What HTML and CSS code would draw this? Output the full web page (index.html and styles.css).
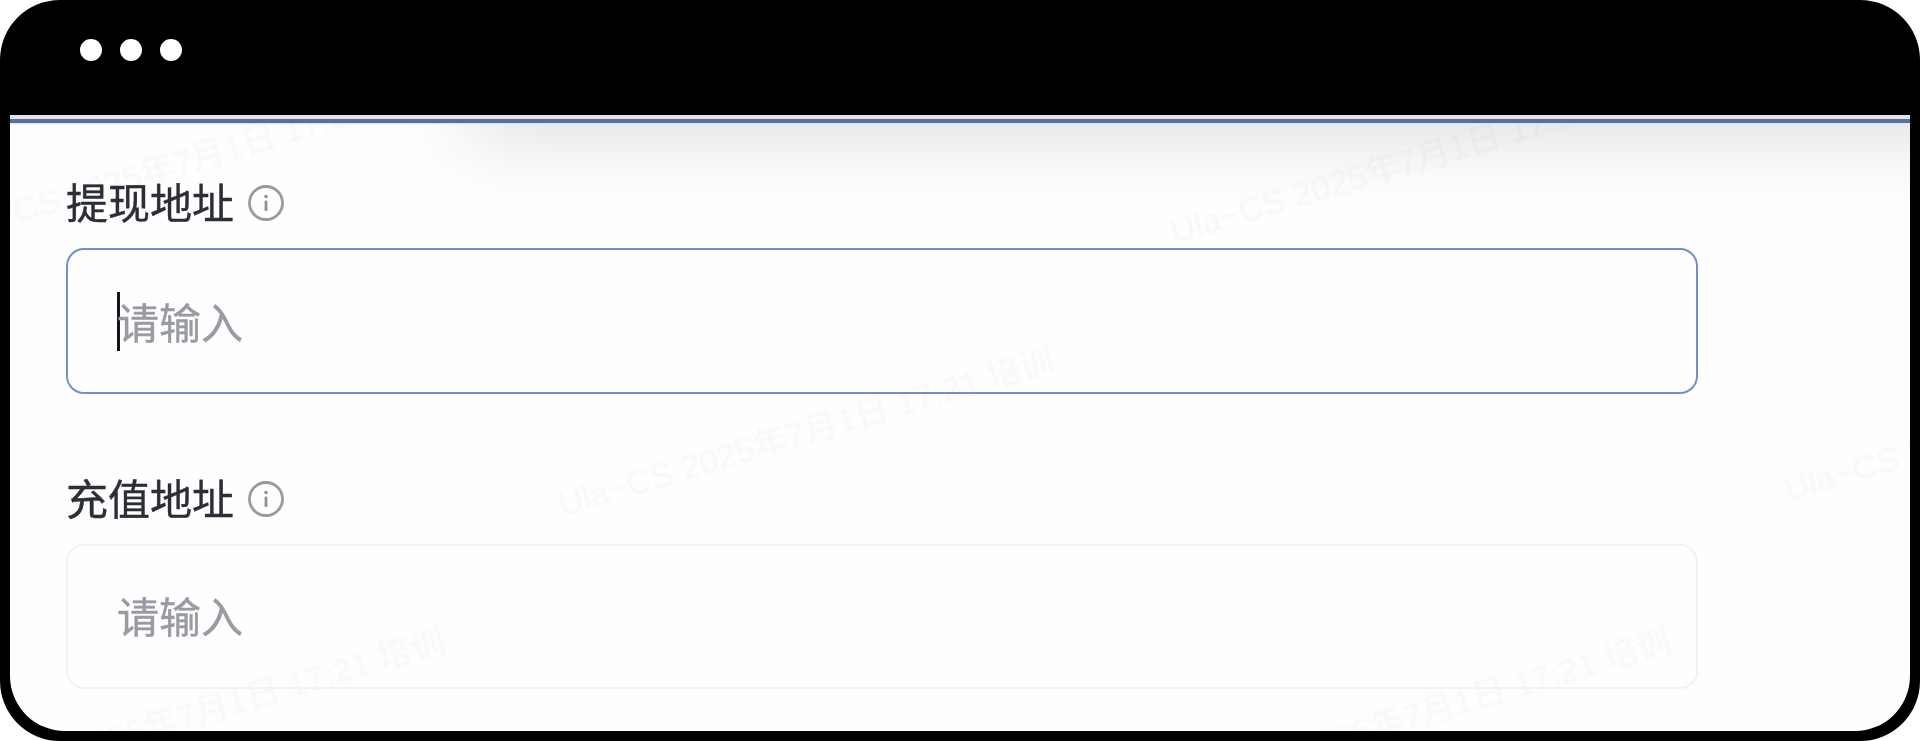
FILE: index.html
```html
<!DOCTYPE html>
<html lang="zh-CN">
<head>
  <meta charset="UTF-8">
  <meta name="viewport" content="width=device-width, initial-scale=1.0">
  <title>地址设置</title>
  <link rel="stylesheet" href="styles.css">
</head>
<body>
  <div class="frame">
    <div class="titlebar">
      <span class="dot"></span>
      <span class="dot"></span>
      <span class="dot"></span>
    </div>
    <div class="content">
      <!-- watermark layer -->
      <div class="watermarks">
        <span class="wm wm-a">Ula~CS 2025年7月1日 17:21 培训</span>
        <span class="wm wm-b">Ula~CS 2025年7月1日 17:21 培训</span>
        <span class="wm wm-c">Ula~CS 2025年7月1日 17:21 培训</span>
        <span class="wm wm-d">Ula~CS 2025年7月1日 17:21 培训</span>
        <span class="wm wm-e">Ula~CS 2025年7月1日 17:21 培训</span>
        <span class="wm wm-f">Ula~CS 2025年7月1日 17:21 培训</span>
      </div>

      <div class="top-line"></div>

      <form class="form">
        <div class="form-item">
          <div class="label">
            <span>提现地址</span>
            <svg class="info" viewBox="0 0 36 36" width="36" height="36">
              <circle cx="18" cy="18" r="16.5" fill="none" stroke="#9a9b9f" stroke-width="2.8"/>
              <circle cx="18" cy="11.5" r="1.8" fill="#8f9096"/>
              <rect x="16.6" y="15.5" width="2.8" height="10.5" rx="1" fill="#8f9096"/>
            </svg>
          </div>
          <div class="input input-focus">
            <span class="caret"></span>
            <span class="placeholder">请输入</span>
          </div>
        </div>
        <div class="form-item">
          <div class="label">
            <span>充值地址</span>
            <svg class="info" viewBox="0 0 36 36" width="36" height="36">
              <circle cx="18" cy="18" r="16.5" fill="none" stroke="#9a9b9f" stroke-width="2.8"/>
              <circle cx="18" cy="11.5" r="1.8" fill="#8f9096"/>
              <rect x="16.6" y="15.5" width="2.8" height="10.5" rx="1" fill="#8f9096"/>
            </svg>
          </div>
          <div class="input">
            <span class="placeholder">请输入</span>
          </div>
        </div>
      </form>
    </div>
  </div>
</body>
</html>
```

FILE: styles.css
```css
html, body {
  margin: 0;
  height: 100%;
  background: #fff;
  overflow: hidden;
}
body {
  font-family: "Noto Sans CJK SC", "Liberation Sans", sans-serif;
}
.frame {
  height: 741px;
  box-sizing: border-box;
  padding: 0 10px 10px;
  background: #000;
  border-radius: 60px;
  display: flex;
  flex-direction: column;
}
.titlebar {
  height: 115px;
  flex: none;
  box-sizing: border-box;
  padding: 39px 0 0 70px;
  display: flex;
  align-items: flex-start;
  gap: 18px;
}
.dot {
  width: 22px;
  height: 22px;
  border-radius: 50%;
  background: #fff;
}
.content {
  position: relative;
  flex: 1;
  background: #fefefe;
  border-radius: 0 0 55px 55px;
  overflow: hidden;
}
/* shadow of something sitting just above the visible area */
.content::before {
  content: "";
  position: absolute;
  top: -60px;
  left: 460px;
  right: -160px;
  height: 60px;
  box-shadow: 0 16px 80px rgba(0, 0, 0, 0.16);
}
.top-line {
  position: relative;
  height: 4px;
  background: #dfe3ee;
  border-bottom: 4px solid #56709f;
  box-shadow: 0 1px 1px #dfe3ea;
}
.watermarks {
  position: absolute;
  inset: 0;
  pointer-events: none;
  filter: blur(1px);
}
.wm {
  position: absolute;
  font-family: "Liberation Sans", "Noto Sans CJK SC", sans-serif;
  font-size: 34px;
  line-height: 44px;
  white-space: nowrap;
  color: rgba(0, 0, 0, 0.03);
  transform: rotate(-16.5deg);
  transform-origin: 0 50%;
}
.wm-a { left: -64px; top: 95px; }
.wm-b { left: 1161px; top: 95px; }
.wm-c { left: 549px; top: 368px; }
.wm-d { left: 1775px; top: 353px; }
.wm-e { left: -60px; top: 649px; }
.wm-f { left: 1166px; top: 649px; }
.form {
  position: relative;
  padding: 48px 0 0 56px;
  width: 1632px;
}
.form-item {
  margin-bottom: 73px;
}
.label {
  display: flex;
  align-items: center;
  gap: 14px;
  height: 64px;
  margin-bottom: 13px;
  font-size: 42px;
  line-height: 60px;
  color: #2b2e37;
}
.label span {
  padding-bottom: 4px;
}
.label span, .placeholder, .info {
  filter: blur(0.5px);
}
.label span, .placeholder {
  -webkit-text-stroke: 0.4px currentColor;
}
.input {
  height: 145px;
  box-sizing: border-box;
  border: 2px solid #f2f2f2;
  border-radius: 18px;
  padding: 0 0 4px 49px;
  display: flex;
  align-items: center;
  font-size: 42px;
  color: #989ba3;
}
.input-focus {
  height: 146px;
  padding-bottom: 0;
  border-color: #7091cc;
}
.caret {
  width: 3px;
  height: 59px;
  margin-right: -3px;
  background: #14161c;
}
.placeholder {
  line-height: 60px;
}
```
